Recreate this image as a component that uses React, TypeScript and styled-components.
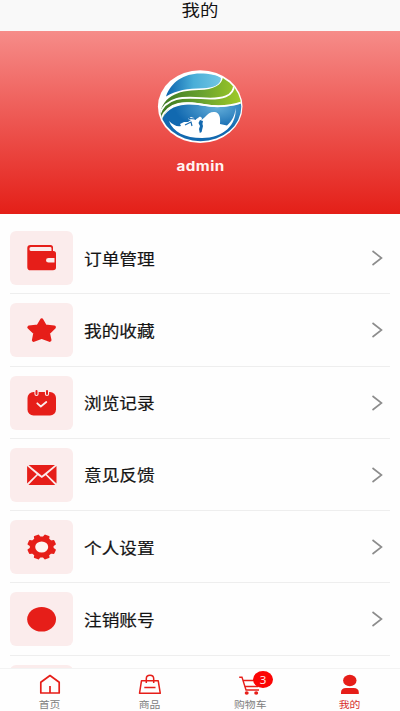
import React from 'react';
import styled, { createGlobalStyle } from 'styled-components';

const RED = '#e61e19';

const GlobalStyle = createGlobalStyle`
  * { box-sizing: border-box; }
  body {
    margin: 0;
    background: #fff;
    font-family: "Noto Sans CJK SC", "Noto Sans", sans-serif;
    color: #141414;
  }
`;

const Screen = styled.div`
  width: 400px;
  height: 711px;
  display: flex;
  flex-direction: column;
  overflow: hidden;
  background: #fefefe;
`;

const TitleBar = styled.header`
  flex: none;
  height: 31px;
  display: flex;
  justify-content: center;
  background: #f9f9f9;
`;

const Title = styled.h1`
  margin: 0;
  font-size: 16px;
  font-weight: 400;
  line-height: 18px;
  transform: scaleX(1.15);
`;

const Profile = styled.section`
  flex: none;
  height: 183px;
  padding-top: 39px;
  display: flex;
  flex-direction: column;
  align-items: center;
  background: linear-gradient(180deg, #f68c89 0%, #e41f18 100%);
`;

const Avatar = styled.svg`
  display: block;
  width: 86px;
  height: 74px;
`;

const UserName = styled.div`
  margin: 13px 0 0 2px;
  font: 700 13px/18px Inter, sans-serif;
  color: #fff4f2;
  letter-spacing: 0.4px;
  transform: scaleX(1.17);
`;

const Menu = styled.main`
  flex: 1;
  min-height: 0;
  overflow: hidden;
  padding: 8px 10px 0;
`;

const MenuRow = styled.div`
  height: 72.3px;
  padding: 9px 0 8.3px;
  display: flex;
  align-items: center;
  border-bottom: 1px solid #eee;
`;

const IconTile = styled.div`
  width: 63px;
  height: 54px;
  flex: none;
  border-radius: 6px;
  background: #fbecec;
`;

const TileIcon = styled.svg`
  display: block;
  width: 63px;
  height: 54px;
  fill: ${RED};
`;

const MenuLabel = styled.span`
  flex: 1;
  margin: -1px 0 0 10.5px;
  font-size: 15.5px;
  line-height: 20px;
  -webkit-text-stroke: 0.2px #141414;
  transform: scaleX(1.14);
  transform-origin: left center;
`;

const Chevron = styled.svg`
  width: 12px;
  height: 18px;
  margin-right: 7px;
  fill: none;
  stroke: #8c8c8c;
  stroke-width: 1.6;
`;

const TabBar = styled.nav`
  flex: none;
  height: 43px;
  display: grid;
  grid-template-columns: repeat(4, 1fr);
  border-top: 1px solid #f3f3f3;
  background: #fefefe;
`;

const Tab = styled.div<{ $active?: boolean }>`
  position: relative;
  display: flex;
  flex-direction: column;
  align-items: center;
  padding-top: 4px;
  color: ${({ $active }) => ($active ? '#d8302c' : '#808080')};
`;

const TabIcon = styled.svg`
  display: block;
  width: 24px;
  height: 24px;
  fill: none;
  stroke: ${RED};
  stroke-width: 1.5;
`;

const TabLabel = styled.span`
  margin-top: 1px;
  font-size: 9.5px;
  line-height: 13px;
  transform: scaleX(1.14);
`;

const Badge = styled.span`
  position: absolute;
  left: 53px;
  top: 2px;
  width: 20px;
  height: 17px;
  border-radius: 50%;
  background: #fb0505;
  color: #ffe9e9;
  font: 11.5px/17px "Noto Sans", sans-serif;
  text-align: center;
`;

const Logo = () => (
  <Avatar viewBox="0 0 86 74">
    <defs>
      <linearGradient id="sky" x1="0" x2="1">
        <stop offset="0" stopColor="#0b62ad" />
        <stop offset=".5" stopColor="#4aaed8" />
        <stop offset="1" stopColor="#72c6e3" />
      </linearGradient>
      <linearGradient id="hill" x1="0" x2="1">
        <stop offset="0" stopColor="#397522" />
        <stop offset=".5" stopColor="#69a22f" />
        <stop offset="1" stopColor="#a6ce25" />
      </linearGradient>
      <radialGradient id="sea" cx=".68" cy=".12" r=".5">
        <stop offset="0" stopColor="#62add9" />
        <stop offset="1" stopColor="#1269b0" />
      </radialGradient>
      <clipPath id="globe"><ellipse cx="43.5" cy="36.8" rx="40.8" ry="34.4" /></clipPath>
    </defs>
    <ellipse cx="43.2" cy="36.6" rx="42.3" ry="36.4" fill="#fff" />
    <g clipPath="url(#globe)">
      <path d="M9 26.5C14 12 27 3.5 43 3.5C53 3.5 60 5 64 8C64 15 56 18 46 18.2C30 18.6 20 20 9 26.5Z" fill="url(#sky)" />
      <path d="M2 50C4 26 20 20.5 42 20C57 19.5 65 15 66 7H88V33C74 36.5 62 36.5 47 34C27 30 12 32 6 48Z" fill="url(#hill)" />
      <path d="M5 49C13 33.5 30 33 46 35.8C61 38.5 73 37 86 33V74H3Z" fill="url(#sea)" />
      <path d="M2 46C8 26 28 27 44 28.2C66 30 77 26 77 15" fill="none" stroke="#fff" strokeWidth="1.8" />
      <path d="M4 49C11 31 29 31.5 47 34.9C62 37.5 73 36.5 86 32" fill="none" stroke="#fff" strokeWidth="1.9" />
    </g>
    <path d="M12 51C16 55 20 57 24 56L23 54L27 52L31 52L34 50L31 49L34 47L37 48L38 50L43 46.5L45 48L44.5 50L48 47C51 43.5 54 41.5 58 42C63 43 63.5 48 63 54L70 55.5C75 51 78 46 78.5 38C80 55 66 68 45 68C28 68 16 62 12 51Z" fill="#fff" />
    <path d="M28 55L34 52L35 56M32 48.5L39 49" fill="none" stroke="#176ab0" strokeWidth="1.2" />
    <path d="M43 50L46 51L45.4 54L46 56L44.6 62L42.8 63L42 59L43 56L41.5 53Z" fill="#1269b0" />
  </Avatar>
);

const WalletIcon = () => (
  <TileIcon viewBox="0 0 63 54">
    <path fillRule="evenodd" d="M20.5 14H40.5Q43 14 43 16.5V20H43.5Q46 20 46 22.5V27H38.5Q36 27 36 29.2T38.5 31.4H46V36.5Q46 39.3 43 39.3H20.5Q17.3 39.3 17.3 36.2V17Q17.3 14 20.5 14ZM21 15.9Q19.4 16 19.4 18Q19.4 20 21 20H41.5V17.2Q41.5 15.9 40 15.9Z" />
    <path d="M44.5 26H46V32H44.5Z" />
  </TileIcon>
);

const StarIcon = () => (
  <TileIcon viewBox="0 0 63 54">
    <path d="M31.7 17L35.3 23.3L44.2 24.3L38.3 30L39.8 37.2L31.7 34.2L23.6 37.2L25 30L19 24.3L28 23.3Z" stroke={RED} strokeWidth="3.4" strokeLinejoin="round" />
  </TileIcon>
);

const CalendarIcon = () => (
  <TileIcon viewBox="0 0 63 54">
    <rect x="17.5" y="16" width="28.5" height="23.5" rx="6" />
    <path d="M26.5 13V18M37 13V18" stroke="#fbecec" strokeWidth="4.2" strokeLinecap="round" />
    <path d="M26.5 15V18M37 15V18" stroke={RED} strokeWidth="2" strokeLinecap="round" />
    <path d="M27.3 27.3L30.8 30.5L36.3 26" fill="none" stroke="#fbecec" strokeWidth="1.8" strokeLinecap="round" strokeLinejoin="round" />
  </TileIcon>
);

const MailIcon = () => (
  <TileIcon viewBox="0 0 63 54">
    <path d="M18.6 17H45L31.8 27.8ZM17.1 18.1L26.7 26.2L17.1 35.5ZM46.5 18.1V35.5L36.8 26.2ZM27.8 27.2L31.8 30.1L35.7 27.2L45.2 36.9H18.4Z" />
  </TileIcon>
);

// Eight teeth, each described by four polar points around the hub.
const gearOutline = Array.from({ length: 8 }, (_, tooth) =>
  [[-14, 10.8], [-8, 13.3], [8, 13.3], [14, 10.8]].map(([offset, radius]) => {
    const angle = ((22.5 + tooth * 45 + offset) * Math.PI) / 180;
    const x = 31.7 + radius * Math.cos(angle) * 1.04;
    const y = 27 + radius * Math.sin(angle) * 0.9;
    return `${x.toFixed(2)} ${y.toFixed(2)}`;
  }).join('L')
).join('L');

const GearIcon = () => (
  <TileIcon viewBox="0 0 63 54">
    <path d={`M${gearOutline}Z`} stroke={RED} strokeWidth="1.6" strokeLinejoin="round" />
    <ellipse cx="31.7" cy="27" rx="6.5" ry="5.5" fill="#fff5f3" />
  </TileIcon>
);

const DotIcon = () => (
  <TileIcon viewBox="0 0 63 54">
    <ellipse cx="31.6" cy="27.2" rx="14.4" ry="12.3" />
  </TileIcon>
);

const rows = [
  { label: '订单管理', Icon: WalletIcon },
  { label: '我的收藏', Icon: StarIcon },
  { label: '浏览记录', Icon: CalendarIcon },
  { label: '意见反馈', Icon: MailIcon },
  { label: '个人设置', Icon: GearIcon },
  { label: '注销账号', Icon: DotIcon },
];

export default function App() {
  return (
    <Screen>
      <GlobalStyle />
      <TitleBar><Title>我的</Title></TitleBar>
      <Profile>
        <Logo />
        <UserName>admin</UserName>
      </Profile>
      <Menu>
        {rows.map(({ label, Icon }) => (
          <MenuRow key={label}>
            <IconTile><Icon /></IconTile>
            <MenuLabel>{label}</MenuLabel>
            <Chevron viewBox="0 0 12 18"><path d="M1.5 2L10.5 9L1.5 16" /></Chevron>
          </MenuRow>
        ))}
        <MenuRow><IconTile /></MenuRow>
      </Menu>
      <TabBar>
        <Tab>
          <TabIcon viewBox="0 0 24 24">
            <path d="M2.8 9.2L12 2.5L21.2 9.2V20H2.8ZM12 13V20" strokeWidth="1.7" strokeLinejoin="round" />
          </TabIcon>
          <TabLabel>首页</TabLabel>
        </Tab>
        <Tab>
          <TabIcon viewBox="0 0 24 24">
            <path d="M3.5 7.7H20.2L22.3 20.3H1.5ZM8.3 10V5.8Q8.3 2.2 12 2.2T15.7 5.8V10M6.3 14.5H17.5" strokeLinejoin="round" />
          </TabIcon>
          <TabLabel>商品</TabLabel>
        </Tab>
        <Tab>
          <TabIcon viewBox="0 0 24 24">
            <path d="M1.2 4.2H4L8 17H21M5.2 7.5H22L19.7 13.5H7" strokeWidth="1.4" />
            <ellipse cx="8.7" cy="20" rx="2" ry="1.8" fill={RED} stroke="none" />
            <ellipse cx="18.2" cy="20" rx="2" ry="1.8" fill={RED} stroke="none" />
          </TabIcon>
          <Badge>3</Badge>
          <TabLabel>购物车</TabLabel>
        </Tab>
        <Tab $active>
          <TabIcon viewBox="0 0 24 24">
            <ellipse cx="11.8" cy="7.5" rx="6.7" ry="5.8" fill={RED} stroke="none" />
            <path d="M3 21V19.5Q3 15 8 15H15.6Q20.8 15 20.8 19.5V21Z" fill={RED} stroke="none" />
          </TabIcon>
          <TabLabel>我的</TabLabel>
        </Tab>
      </TabBar>
    </Screen>
  );
}
